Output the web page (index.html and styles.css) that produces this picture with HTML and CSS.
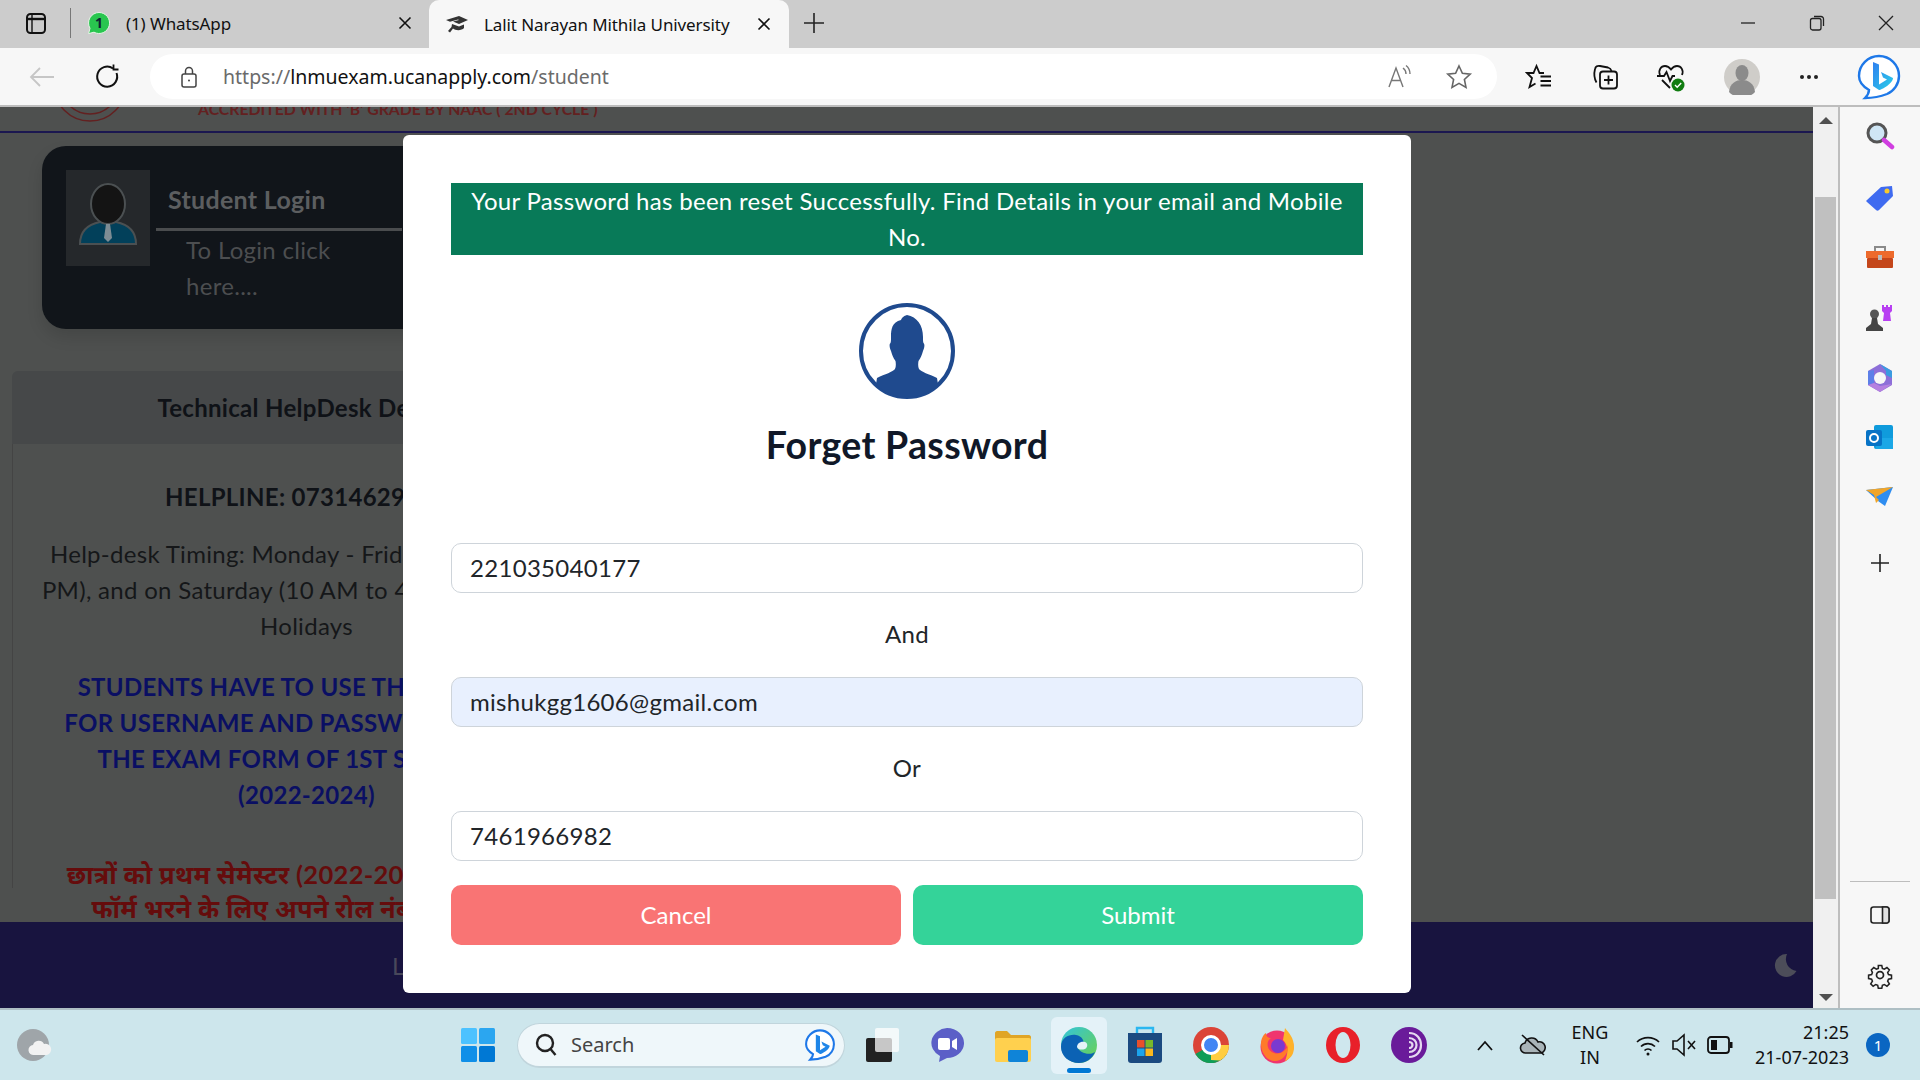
FILE: index.html
```html
<!DOCTYPE html>
<html>

<head>
    <meta charset="utf-8">
    <title>Lalit Narayan Mithila University</title>
    <link rel="stylesheet" href="styles.css">
</head>

<body>
    <div class="tabbar">
        <span class="tab-toggle">
            <svg width="24" height="24" viewBox="0 0 24 24" fill="none" stroke="#111" stroke-width="2"><rect x="3" y="3" width="18" height="19" rx="3.500"/><path d="M3 8h18" stroke-width="2.400"/><path d="M8 4v17" stroke-width="1.400"/></svg>
        </span>
        <span class="tab-sep"></span>
        <div class="tab">
            <svg class="tab-icon" width="24" height="24" viewBox="0 0 24 24"><path d="M12 1.500a10.500 10.500 0 0 0-9 15.800L1.600 22.600l5.400-1.400A10.500 10.500 0 1 0 12 1.500z" fill="#29c64f" stroke="#e8f5e8"/><text x="12" y="17" class="wa-num">1</text></svg>
            <span class="tab-title">(1) WhatsApp</span>
            <svg class="tab-close" width="14" height="14" viewBox="0 0 14 14" stroke="#111" stroke-width="1.600"><path d="M1.500 1.500l11 11M12.500 1.500l-11 11"/></svg>
        </div>
        <div class="tab tab-active">
            <svg class="tab-icon" width="24" height="24" viewBox="0 0 24 24" fill="#333"><path d="M1 8l13-4 9 4-9 4-6-2.500L14 8l-1-.5-8 2.300z"/><path d="M7 12l7 2.500 5-2v3.500c-2 2.500-8 3-11 .5l-3 4-2-1.500 3.500-4z"/></svg>
            <span class="tab-title">Lalit Narayan Mithila University</span>
            <svg class="tab-close" width="14" height="14" viewBox="0 0 14 14" stroke="#111" stroke-width="1.600"><path d="M1.500 1.500l11 11M12.500 1.500l-11 11"/></svg>
        </div>
        <svg class="new-tab" width="24" height="24" viewBox="0 0 24 24" stroke="#222" stroke-width="1.600"><path d="M12 2v20M2 12h20"/></svg>
        <div class="win-btns">
            <svg width="18" height="18" viewBox="0 0 18 18" stroke="#222" stroke-width="1.300"><path d="M2 9h14"/></svg>
            <svg width="18" height="18" viewBox="0 0 18 18" fill="none" stroke="#222" stroke-width="1.300"><rect x="2.500" y="4.500" width="10.500" height="11.500" rx="2"/><path d="M6 2.500h7a2.500 2.500 0 0 1 2.500 2.500v7"/></svg>
            <svg width="18" height="18" viewBox="0 0 18 18" stroke="#222" stroke-width="1.300"><path d="M2 2l14 14M16 2L2 16"/></svg>
        </div>
    </div>

    <div class="toolbar">
        <svg class="tool-back" width="28" height="24" viewBox="0 0 28 24" fill="none" stroke="#c6c6c6" stroke-width="1.800"><path d="M26 12H3M12 3l-9 9 9 9"/></svg>
        <svg class="tool-reload" width="28" height="28" viewBox="0 0 28 28" fill="none" stroke="#111" stroke-width="2"><path d="M22.500 10a10 10 0 1 1-3.500-4.500"/><path d="M19.500 1.500v5h5" stroke-width="1.800"/></svg>
        <div class="addr">
            <svg width="20" height="24" viewBox="0 0 20 24" fill="none" stroke="#444" stroke-width="1.500"><rect x="3" y="9" width="14" height="13" rx="2"/><path d="M6.500 9V6a3.500 3.500 0 0 1 7 0v3"/><circle cx="10" cy="15.500" r="1" fill="#444" stroke="none"/></svg>
            <span class="url"><span class="url-dim">https://</span>lnmuexam.ucanapply.com<span class="url-dim">/student</span></span>
            <svg class="addr-read" width="26" height="26" viewBox="0 0 26 26" fill="none" stroke="#777" stroke-width="1.400"><path d="M3 23L10 4l7 19M5.500 16.500h9M17 4c2 1.500 3 3.500 3 6M20 1.500c2.500 2 4 5 4 8.500"/></svg>
            <svg class="addr-star" width="28" height="28" viewBox="0 0 28 28" fill="none" stroke="#666" stroke-width="1.600"><path d="M14 3l3.400 7.300 7.800.900-5.800 5.300 1.600 7.900L14 20.400l-7 4 1.600-7.900L2.800 11.200l7.800-.900z"/></svg>
        </div>
        <div class="tool-icons">
            <svg width="28" height="28" viewBox="0 0 28 28" fill="none" stroke="#111" stroke-width="1.800"><path d="M19 10h-4.500L11.500 3 8.500 10H2l5 5-2.500 9 6-3.500"/><path d="M15.500 13.500H26M15.500 18H26M15.500 22.500H26" stroke-width="2"/></svg>
            <svg width="28" height="28" viewBox="0 0 28 28" fill="none" stroke="#111" stroke-width="1.800"><rect x="9" y="8.500" width="17" height="17" rx="3"/><path d="M17.500 12.500v9M13 17h9M5.500 19.500C3.500 16 3 10 4 6c.5-2.500 2.500-3.500 5-3l8 1.500c2 .5 3 1.500 3.500 3.500"/></svg>
            <svg width="30" height="30" viewBox="0 0 30 30" fill="none" stroke="#111" stroke-width="1.800"><path d="M4 13c-2-5 1-9 5-9 3 0 4.500 1.500 6 3.500C16.500 5.500 18 4 21 4c4 0 7 4 5 9"/><path d="M1 14h7l2.500-4 3.500 9 2.500-5H19M6 18l8 8"/><circle cx="22" cy="23" r="6.500" fill="#107c10" stroke="none"/><path d="M19 23l2.200 2.200 4-4.200" stroke="#fff" stroke-width="1.400"/></svg>
            <svg width="36" height="36" viewBox="0 0 36 36"><circle cx="18" cy="18" r="18" fill="#cfcdc9"/><ellipse cx="18" cy="14" rx="6.500" ry="8" fill="#8b8b8b"/><path d="M5 33c1-9 7-12 13-12s12 3 13 12a18 18 0 0 1-26 0z" fill="#8b8b8b"/></svg>
            <svg width="24" height="24" viewBox="0 0 24 24" fill="#222"><circle cx="5" cy="12" r="2"/><circle cx="12" cy="12" r="2"/><circle cx="19" cy="12" r="2"/></svg>
        </div>
        <svg class="tool-bing" width="46" height="46" viewBox="0 0 46 46"><defs><linearGradient id="bingA" x1="0" y1="0" x2="1" y2="1"><stop offset="0" stop-color="#2f7ff0"/><stop offset="1" stop-color="#2ad0e8"/></linearGradient></defs><path d="M23 2c11 0 20 9 20 20 0 8-5 15-12 18-5 2-13 4-22 4 3-3 4-5 4-8C6 32 3 27 3 22 3 11 12 2 23 2z" fill="#fff" stroke="#1e78e8" stroke-width="2.400"/><path d="M17 8l6 2.500v20l8-5-4-2-2-5.500 12 6c0 5-11 12-14 12l-6-4z" fill="url(#bingA)"/></svg>
    </div>

    <div class="main">
        <div class="page">
            <div class="site-head">
                <svg class="site-seal" width="76" height="20" viewBox="0 0 76 20" fill="none" stroke="#632020" stroke-width="1.500"><path d="M2 -18a36 36 0 0 0 72 0"/><path d="M9 -18a29 29 0 0 0 58 0"/></svg>
                <span class="site-grade">ACCREDITED WITH 'B' GRADE BY NAAC ( 2ND CYCLE )</span>
            </div>
            <div class="page-body">
                <div class="login-card">
                    <div class="login-pic">
                        <svg width="84" height="96" viewBox="0 0 84 96"><path d="M14 74c0-14 10-20 20-22h16c10 2 20 8 20 22z" fill="#02405a" stroke="#4b5052" stroke-width="2"/><ellipse cx="42" cy="34" rx="17" ry="20" fill="#141414" stroke="#4b5052" stroke-width="2"/><path d="M40 54h4l2 14-4 4-4-4z" fill="#7d8c94"/></svg>
                    </div>
                    <div class="login-text">
                        <div class="login-title">Student Login</div>
                        <div class="login-sub">To Login click<br>here....</div>
                    </div>
                </div>
                <div class="help">
                    <div class="help-head">Technical HelpDesk Details</div>
                    <div class="help-body">
                        <p class="help-phone">HELPLINE: 07314629000</p>
                        <p class="help-time">Help-desk Timing: Monday - Friday (10 AM to 6<br>PM), and on Saturday (10 AM to 4 PM) except on<br>Holidays</p>
                        <p class="help-blue">STUDENTS HAVE TO USE THE ROLL NO.<br>FOR USERNAME AND PASSWORD TO FILL<br>THE EXAM FORM OF 1ST SEMESTER<br>(2022-2024)</p>
                        <p class="help-red" lang="hi">छात्रों को प्रथम सेमेस्टर (2022-2024) का परीक्षा<br>फॉर्म भरने के लिए अपने रोल नंबर का प्रयोग</p>
                    </div>
                </div>
            </div>
            <div class="site-foot">
                <span class="foot-text">Lalit Narayan Mithila University</span>
                <svg class="foot-moon" width="26" height="26" viewBox="0 0 26 26"><path d="M15 2a11.500 11.500 0 1 0 9.500 17A12 12 0 0 1 15 2z" fill="#4c4d59"/></svg>
            </div>

            <div class="modal">
                <div class="alert">Your Password has been reset Successfully. Find Details in your email and Mobile No.</div>
                <svg class="modal-avatar" width="96" height="96" viewBox="0 0 96 96"><defs><clipPath id="avatarClip"><circle cx="48" cy="48" r="46"/></clipPath></defs><circle cx="48" cy="48" r="46" fill="#fff" stroke="#1f4a8e" stroke-width="4"/><path clip-path="url(#avatarClip)" d="M48 12c-4 1-6 4-6 5-9 2-10 9-10 17 0 3 0 5-.5 6-1.500 1-1 5 .5 8 1 3 2 7 4.500 10 .5 3 .5 6-.5 8-2 3-10 5-18 9l-4 25h68l-4-25c-8-4-16-6-18-9-1-2-1-5-.5-8 2.500-3 3.500-7 4.500-10 1.500-3 2-7 .5-8-.5-1-.5-3-.5-6 0-12-6-20-16-22z" fill="#1f4a8e"/></svg>
                <h2 class="modal-title">Forget Password</h2>
                <input class="field" value="221035040177">
                <div class="field-sep">And</div>
                <input class="field field-filled" value="mishukgg1606@gmail.com">
                <div class="field-sep">Or</div>
                <input class="field" value="7461966982">
                <div class="modal-btns">
                    <button class="btn btn-cancel">Cancel</button>
                    <button class="btn btn-submit">Submit</button>
                </div>
            </div>
        </div>

        <div class="scrollbar">
            <span class="scroll-up"></span>
            <div class="scroll-track"><div class="scroll-thumb"></div></div>
            <span class="scroll-down"></span>
        </div>

        <div class="sidebar">
            <svg class="side-first" width="30" height="30" viewBox="0 0 30 30" fill="none"><circle cx="12" cy="12" r="9" fill="#cfe6f5" stroke="#555" stroke-width="3"/><path d="M19 19l8 7" stroke="#d03ee0" stroke-width="4.500" stroke-linecap="round"/></svg>
            <svg width="30" height="30" viewBox="0 0 30 30"><path d="M2 17L16 4l11-1 1 10-14 14c-1 1-2 1-3 0l-9-8c-1-1-1-1 0-2z" fill="#3f6bf0"/><circle cx="22" cy="8" r="2.500" fill="#f7c92d"/></svg>
            <svg width="30" height="30" viewBox="0 0 30 30"><path d="M10 8V4h10v4" fill="none" stroke="#8a8a8a" stroke-width="2"/><rect x="1" y="8" width="28" height="7" fill="#ed6a2c"/><rect x="2" y="15" width="26" height="10" rx="1" fill="#c4461a"/><rect x="13" y="12" width="4" height="5" fill="#bbb"/></svg>
            <svg width="30" height="30" viewBox="0 0 30 30"><path d="M17 2h2v2h2V2h2v2h2V2h2v6l-2 2 1 8h-8l1-8-2-2z" fill="#b83ff2"/><circle cx="9.500" cy="11" r="4.500" fill="#555"/><path d="M7 15h5l1 6 5 4v3H1v-3l5-4z" fill="#444"/></svg>
            <svg width="30" height="30" viewBox="0 0 30 30"><path d="M15 1l12 7v14l-12 7-12-7V8z" fill="#8d6fd8"/><path d="M15 1l12 7v7l-6-3V8z" fill="#3a9be0"/><path d="M3 8l6-1v13l-6 2z" fill="#5c7fe8"/><path d="M9 20l6 3 12-2-12 8-12-7z" fill="#b580e0"/><circle cx="15" cy="15" r="6" fill="#f7f7f7"/></svg>
            <svg width="30" height="30" viewBox="0 0 30 30"><rect x="9" y="2" width="19" height="24" rx="2" fill="#0f9bdc"/><path d="M11 15l17 0v11H11z" fill="#1ba7e6"/><rect x="1" y="7" width="16" height="16" rx="2" fill="#0773c6"/><circle cx="9" cy="15" r="4" fill="none" stroke="#fff" stroke-width="2"/></svg>
            <svg width="30" height="30" viewBox="0 0 30 30"><path d="M1 7l27-3-8 19-7-5z" fill="#2e8df0"/><path d="M1 7l8 5 2 8 3-3-3-3 17-10z" fill="#f0a52a"/></svg>
            <svg class="side-add" width="22" height="22" viewBox="0 0 22 22" stroke="#222" stroke-width="1.600"><path d="M11 2v18M2 11h18"/></svg>
            <div class="side-bottom">
                <span class="side-rule"></span>
                <svg width="24" height="24" viewBox="0 0 24 24" fill="none" stroke="#222" stroke-width="1.600"><rect x="3" y="4" width="18" height="16" rx="2.500"/><path d="M14.500 4v16M14.500 4h4a2.500 2.500 0 0 1 2.500 2.500v11a2.500 2.500 0 0 1-2.500 2.500h-4z" fill="#e0e0e0"/></svg>
                <svg width="28" height="28" viewBox="0 0 24 24" fill="none" stroke="#222" stroke-width="1.500"><circle cx="12" cy="12" r="3"/><path d="M10.300 2.500h3.400l.6 3 1.900.8 2.600-1.700 2.400 2.400-1.700 2.600.8 1.900 3 .6v3.400l-3 .6-.8 1.900 1.700 2.600-2.400 2.400-2.600-1.700-1.900.8-.6 3h-3.400l-.6-3-1.900-.8-2.600 1.700-2.400-2.400 1.700-2.600-.8-1.900-3-.6v-3.400l3-.6.8-1.900L3.400 7l2.400-2.400 2.600 1.700 1.900-.8z" transform="translate(1.600 1.600) scale(.87)"/></svg>
            </div>
        </div>
    </div>

    <div class="taskbar">
        <svg class="weather" width="36" height="36" viewBox="0 0 36 36"><circle cx="16" cy="18" r="16" fill="#9fa5a9"/><path d="M17 28a5 5 0 0 1-1-10 6 6 0 0 1 11-1 5.500 5.500 0 0 1 3 11z" fill="#f2f2f2"/></svg>
        <span class="task-item task-start">
            <svg width="36" height="36" viewBox="0 0 36 36"><rect x="1" y="1" width="16" height="16" rx="1.500" fill="#4cc2ff"/><rect x="19" y="1" width="16" height="16" rx="1.500" fill="#2ba6f0"/><rect x="1" y="19" width="16" height="16" rx="1.500" fill="#0f8fe8"/><rect x="19" y="19" width="16" height="16" rx="1.500" fill="#0078d4"/></svg>
        </span>
        <div class="task-search">
            <svg width="26" height="26" viewBox="0 0 26 26" fill="none" stroke="#222" stroke-width="2.400"><circle cx="12" cy="11" r="8"/><path d="M17.500 17l5 6"/></svg>
            <span class="task-search-text">Search</span>
            <svg class="task-search-bing" width="32" height="36" viewBox="0 0 46 46"><path d="M23 2c11 0 20 9 20 20 0 8-5 15-12 18-5 2-13 4-22 4 3-3 4-5 4-8C6 32 3 27 3 22 3 11 12 2 23 2z" fill="#fff" stroke="#1e78e8" stroke-width="3"/><path d="M17 8l6 2.500v20l8-5-4-2-2-5.500 12 6c0 5-11 12-14 12l-6-4z" fill="#1f86e8"/></svg>
        </div>
        <span class="task-item">
            <svg width="36" height="36" viewBox="0 0 36 36"><rect x="3" y="11" width="26" height="24" rx="2" fill="#222"/><rect x="12" y="1" width="24" height="24" rx="2" fill="#fff" fill-opacity=".75"/></svg>
        </span>
        <span class="task-item">
            <svg width="36" height="36" viewBox="0 0 36 36"><path d="M18 1a17 15 0 0 1 17 16 17 15 0 0 1-17 14l-8 4 1-6A17 15 0 0 1 18 1z" fill="#5b5fc7"/><rect x="9" y="11" width="12" height="12" rx="2" fill="#fff"/><path d="M23 14l5-3v12l-5-3z" fill="#fff"/></svg>
        </span>
        <span class="task-item">
            <svg width="38" height="36" viewBox="0 0 38 36"><path d="M1 6c0-1 1-2 2-2h10l4 4h18c1 0 2 1 2 2v4H1z" fill="#e0a526"/><rect x="1" y="11" width="36" height="24" rx="2" fill="#ffd04e"/><rect x="14" y="23" width="20" height="12" rx="2" fill="#0f84d8"/></svg>
        </span>
        <span class="task-item task-current">
            <svg width="38" height="38" viewBox="0 0 38 38"><defs><linearGradient id="edgeA" x1="0" y1="0" x2="1" y2="1"><stop offset="0" stop-color="#31c4dc"/><stop offset="1" stop-color="#6ed24c"/></linearGradient></defs><circle cx="19" cy="19" r="18" fill="url(#edgeA)"/><path d="M1 21C1 11 10 8 16 9c6 1 9 6 7 11-1 3-5 3-6 1 3 6 12 9 18 5-3 7-9 11-16 11C9 37 1 30 1 21z" fill="#0b62b4"/><path d="M17 21c0-3 3-6 8-5 3 1 3 5 0 7-3 1-7 1-8-2z" fill="#e4f2f8"/></svg>
        </span>
        <span class="task-item">
            <svg width="36" height="38" viewBox="0 0 36 38"><path d="M10 8V2h16v6" fill="none" stroke="#2ab7f0" stroke-width="2.400"/><path d="M1 7h34v27a3 3 0 0 1-3 3H4a3 3 0 0 1-3-3z" fill="#1b4a80"/><rect x="10" y="14" width="7.500" height="7.500" fill="#e9502b"/><rect x="18.500" y="14" width="7.500" height="7.500" fill="#78b82a"/><rect x="10" y="22.500" width="7.500" height="7.500" fill="#1ca4ec"/><rect x="18.500" y="22.500" width="7.500" height="7.500" fill="#fbb81d"/></svg>
        </span>
        <span class="task-item">
            <svg width="36" height="36" viewBox="0 0 36 36"><circle cx="18" cy="18" r="18" fill="#db4437"/><path d="M18 18L33.600 27A18 18 0 0 1 9 33.600z" fill="#0f9d58"/><path d="M18 18h18a18 18 0 0 1-9 15.600L18 33z" fill="#ffcd40"/><path d="M18 18L2.400 27A18 18 0 0 0 18 36z" fill="#0f9d58"/><circle cx="18" cy="18" r="8.500" fill="#4285f4" stroke="#fff" stroke-width="3"/></svg>
        </span>
        <span class="task-item">
            <svg width="36" height="38" viewBox="0 0 36 38"><circle cx="18" cy="21" r="16.500" fill="#f0356e"/><path d="M26 2c4 5 9 10 9 19 0 8-4 12-9 14 3-7 4-15-2-21z" fill="#ffb22a"/><path d="M2 18c0-5 2-9 5-11 0 3 2 5 5 5-5 3-5 12 3 15 6 2 12-2 14-8 1 9-6 16-13 16C8 35 2 27 2 18z" fill="#ff7a2a"/><circle cx="19" cy="20" r="7" fill="#7a3ad0"/></svg>
        </span>
        <span class="task-item">
            <svg width="36" height="38" viewBox="0 0 36 38"><ellipse cx="18" cy="19" rx="17" ry="18" fill="#e8202a"/><ellipse cx="18" cy="19" rx="7.500" ry="13" fill="#cfe7ee"/></svg>
        </span>
        <span class="task-item">
            <svg width="36" height="36" viewBox="0 0 36 36" fill="none" stroke="#e6d8f0" stroke-width="2.200"><circle cx="18" cy="18" r="18" fill="#6a1b9a" stroke="none"/><path d="M18 6c8 0 12 6 12 12s-4 12-12 12M18 11c5 0 7.500 3.500 7.500 7s-2.500 7-7.500 7M18 15c2 0 3.500 1.500 3.500 3s-1.500 3-3.500 3"/></svg>
        </span>
        <div class="tray">
            <svg class="tray-caret" width="18" height="12" viewBox="0 0 18 12" fill="none" stroke="#111" stroke-width="1.800"><path d="M2 11l7-8 7 8"/></svg>
            <svg class="tray-cloud" width="28" height="26" viewBox="0 0 28 26" fill="none" stroke="#111" stroke-width="1.600"><path d="M7 21a5 5 0 0 1-1-10 7 7 0 0 1 13-1 5.500 5.500 0 0 1 3 11z" fill="#a9b4b8"/><path d="M3 3l22 20"/></svg>
            <div class="tray-lang">ENG<br>IN</div>
            <svg class="tray-wifi" width="26" height="24" viewBox="0 0 26 24" fill="none" stroke="#111" stroke-width="1.700"><path d="M2 9a16 16 0 0 1 22 0M6 13.500a10 10 0 0 1 14 0M9.500 17.500a5 5 0 0 1 7 0"/><circle cx="13" cy="21" r="1.500" fill="#111" stroke="none"/></svg>
            <svg class="tray-vol" width="26" height="24" viewBox="0 0 26 24" fill="none" stroke="#111" stroke-width="1.600"><path d="M2 8h4l7-6v20l-7-6H2zM17 8l7 8M24 8l-7 8"/></svg>
            <svg class="tray-batt" width="26" height="18" viewBox="0 0 26 18"><rect x="1" y="1" width="21" height="16" rx="3" fill="none" stroke="#111" stroke-width="1.800"/><rect x="4" y="4" width="6" height="10" fill="#111"/><rect x="23" y="6" width="2.500" height="6" fill="#111"/></svg>
            <div class="tray-clock">21:25<br>21-07-2023</div>
            <span class="tray-badge">1</span>
        </div>
    </div>
</body>

</html>
```

FILE: styles.css
```css
* {
    box-sizing: border-box;
}

html,
body {
    height: 100%;
}

body {
    margin: 0;
    width: 1920px;
    height: 1080px;
    overflow: hidden;
    display: flex;
    flex-direction: column;
    font-family: "Noto Sans", sans-serif;
    background: #f7f7f7;
}

/* tab strip */
.tabbar {
    height: 48px;
    padding-bottom: 2px;
    display: flex;
    align-items: center;
    background: #cccccc;
    color: #111;
    font-size: 17px;
    letter-spacing: -.1px;
}

.tab-toggle {
    width: 24px;
    margin-left: 24px;
}

.tab-toggle svg,
.tab svg {
    display: block;
}

.tab-sep {
    width: 1px;
    height: 30px;
    margin: 0 16px 0 22px;
    background: #777;
}

.tab {
    width: 342px;
    height: 46px;
    display: flex;
    align-items: center;
}

.tab-icon {
    margin: 0 15px 0 0;
}

.tab-title {
    flex: 1;
    white-space: nowrap;
}

.tab-close {
    margin-right: 17px;
}

.tab-active {
    width: 360px;
    height: 48px;
    margin-bottom: -2px;
    padding: 0 1px 0 16px;
    background: #f7f7f7;
    border-radius: 10px 10px 0 0;
}

.new-tab {
    margin-left: 13px;
}

.win-btns {
    margin-left: auto;
    display: flex;
    gap: 51px;
    padding-right: 25px;
}

/* address row */
.toolbar {
    height: 57px;
    flex: none;
    display: flex;
    align-items: center;
    background: #f7f7f7;
}

.tool-back {
    margin-left: 28px;
}

.tool-reload {
    margin-left: 38px;
}

.addr {
    width: 1347px;
    height: 45px;
    margin-left: 28px;
    padding: 0 24px 0 29px;
    display: flex;
    align-items: center;
    background: #fff;
    border-radius: 23px;
}

.url {
    margin-left: 24px;
    font-size: 19.500px;
    color: #111;
}

.url-dim {
    color: #6b6b6b;
}

.addr-read {
    margin-left: auto;
}

.addr-star {
    margin-left: 33px;
}

.tool-icons {
    width: 296px;
    margin-left: 28px;
    display: flex;
    align-items: center;
    justify-content: space-between;
}

.tool-bing {
    margin-left: 35px;
}

/* page area */
.main {
    flex: 1;
    min-height: 0;
    display: flex;
    border-top: 2px solid #bdbdbd;
}

.page {
    position: relative;
    width: 1813px;
    display: flex;
    flex-direction: column;
    overflow: hidden;
    background: #4e504f;
    font-family: "Lato", "Noto Sans", sans-serif;
    letter-spacing: .3px;
}

.site-head {
    height: 26px;
    flex: none;
    padding-left: 52px;
    display: flex;
    background: #4e504f;
    border-bottom: 2px solid #1b1750;
}

.site-seal {
    margin-top: -4px;
}

.site-grade {
    margin: -8px 0 0 70px;
    font-size: 15.800px;
    font-weight: 700;
    letter-spacing: 0;
    color: #632020;
    white-space: nowrap;
}

.page-body {
    flex: 1;
    min-height: 0;
    overflow: hidden;
    padding: 13px 0 0 12px;
}

.login-card {
    width: 560px;
    height: 183px;
    margin-left: 30px;
    padding: 24px;
    display: flex;
    background: #11151a;
    border-radius: 24px;
    box-shadow: 0 8px 16px rgba(0, 0, 0, .12);
}

.login-pic {
    width: 84px;
    height: 96px;
    background: #25282b;
}

.login-text {
    width: 246px;
    margin-left: 6px;
}

.login-title {
    height: 61px;
    padding: 14px 0 0 12px;
    font-size: 25px;
    font-weight: 700;
    color: #5c5e60;
    border-bottom: 3px solid #4a4c4e;
}

.login-sub {
    padding: 1px 0 0 30px;
    font-size: 24px;
    line-height: 36px;
    color: #4c4e50;
}

.help {
    width: 588px;
    margin-top: 42px;
    color: #0f1217;
    font-size: 24px;
    text-align: center;
}

.help-head {
    height: 73px;
    line-height: 73px;
    font-weight: 700;
    background: #464849;
    border-radius: 6px 6px 0 0;
}

.help-body {
    padding: 35px 0 0;
    height: 444px;
    border-left: 1px solid #444;
    line-height: 36px;
    white-space: nowrap;
}

.help-body p {
    margin: 0 0 21px;
}

.help-time {
    color: #151719;
}

.help-phone {
    font-weight: 700;
}

.help-body .help-time {
    margin-bottom: 25px;
}

.help-blue {
    font-weight: 700;
    color: #0a0f63;
}

.help-red {
    font-size: 25.500px;
    font-weight: 700;
    color: #650c0c;
    padding-top: 23px;
    line-height: 34px;
}

.site-foot {
    height: 86px;
    flex: none;
    padding: 0 15px 0 392px;
    display: flex;
    align-items: center;
    justify-content: space-between;
    background: #18143f;
    color: #48485a;
    font-size: 24px;
}

/* dialog over the dimmed page */
.modal {
    position: absolute;
    left: 403px;
    top: 28px;
    width: 1008px;
    height: 858px;
    padding: 48px;
    display: flex;
    flex-direction: column;
    background: #fff;
    border-radius: 6px;
    font-size: 24px;
    color: #212529;
}

.alert {
    height: 72px;
    padding: 0 16px;
    text-align: center;
    line-height: 36px;
    color: #fff;
    background: #087a58;
}

.modal-avatar {
    margin: 48px auto 0;
    flex: none;
}

.modal-title {
    margin: 17px 0 0;
    height: 58px;
    text-align: center;
    font-size: 37.500px;
    line-height: 58px;
    font-weight: 700;
    color: #101828;
}

.field {
    width: 100%;
    height: 50px;
    flex: none;
    padding: 0 18px 2px;
    font: inherit;
    letter-spacing: .3px;
    color: #212529;
    border: 1.500px solid #ced4da;
    border-radius: 10px;
    background: #fff;
}

.modal-title + .field {
    margin-top: 69px;
}

.field-filled {
    background: #e8f0fe;
}

.field-sep {
    height: 84px;
    line-height: 82px;
    text-align: center;
}

.modal-btns {
    margin-top: 24px;
    display: flex;
    gap: 12px;
}

.btn {
    flex: 1;
    height: 60px;
    padding: 0 0 2px;
    font: inherit;
    color: #fff;
    border: 0;
    border-radius: 10px;
}

.btn-cancel {
    background: #f97474;
}

.btn-submit {
    background: #34d399;
}

/* scrollbar and edge sidebar */
.scrollbar {
    width: 25px;
    display: flex;
    flex-direction: column;
    align-items: center;
    padding: 10px 0 7px;
    background: #f0f0f0;
}

.scroll-up,
.scroll-down {
    width: 0;
    height: 0;
    border-left: 7px solid transparent;
    border-right: 7px solid transparent;
}

.scroll-up {
    border-bottom: 7px solid #505050;
}

.scroll-down {
    border-top: 7px solid #505050;
}

.scroll-track {
    flex: 1;
    width: 100%;
    padding: 73px 2px 95px;
}

.scroll-thumb {
    height: 100%;
    background: #c0c0c0;
}

.sidebar {
    width: 82px;
    display: flex;
    flex-direction: column;
    align-items: center;
    gap: 30px;
    padding-top: 14px;
    border-left: 2px solid #bdbdbd;
    background: #f7f7f7;
}

.side-first {
    margin-bottom: 2px;
}

.side-add {
    margin-top: 9px;
}

.side-bottom {
    margin-top: auto;
    width: 100%;
    display: flex;
    flex-direction: column;
    align-items: center;
    gap: 34px;
    padding-bottom: 19px;
}

.side-rule {
    width: 60px;
    height: 1px;
    margin-bottom: -13px;
    background: #bdbdbd;
}

/* windows taskbar */
.taskbar {
    height: 72px;
    flex: none;
    display: flex;
    align-items: center;
    background: #cde6ec;
    border-top: 2px solid #aebfc4;
}

.weather {
    margin-left: 17px;
}

.task-item {
    width: 66px;
    height: 57px;
    display: flex;
    align-items: center;
    justify-content: center;
}

.task-start {
    margin-left: 392px;
}

.task-current {
    position: relative;
    width: 56px;
    margin: 0 5px;
    background: #e4f2f8;
    border-radius: 6px;
}

.task-current::after {
    content: "";
    position: absolute;
    left: 16px;
    bottom: 1px;
    width: 24px;
    height: 5px;
    border-radius: 3px;
    background: #0078d4;
}

.task-search {
    width: 328px;
    height: 45px;
    margin: 0 3px 0 6px;
    padding: 0 8px 0 15px;
    display: flex;
    align-items: center;
    background: #eff7fa;
    border: 1px solid #c1d5dc;
    border-bottom-width: 2px;
    border-radius: 23px;
    font-size: 20px;
    color: #444;
}

.task-search-text {
    margin-left: 12px;
}

.task-search-bing {
    margin-left: auto;
}

.tray {
    flex: 1;
    display: flex;
    align-items: center;
    font-size: 18px;
    line-height: 25px;
    color: #111;
}

.tray-caret {
    margin-left: 34px;
}

.tray-cloud {
    margin-left: 25px;
}

.tray-lang {
    width: 46px;
    margin-left: 20px;
    text-align: center;
}

.tray-wifi {
    margin-left: 22px;
}

.tray-vol {
    margin-left: 10px;
}

.tray-batt {
    margin-left: 10px;
}

.tray-clock {
    width: 114px;
    margin-left: 2px;
    text-align: right;
}

.tray-badge {
    width: 24px;
    height: 24px;
    margin-left: 17px;
    text-align: center;
    line-height: 24px;
    font-size: 15px;
    color: #fff;
    background: #0a66c2;
    border-radius: 50%;
}

.wa-num {
    font-size: 14px;
    font-weight: 700;
    text-anchor: middle;
    fill: #123;
}
```
